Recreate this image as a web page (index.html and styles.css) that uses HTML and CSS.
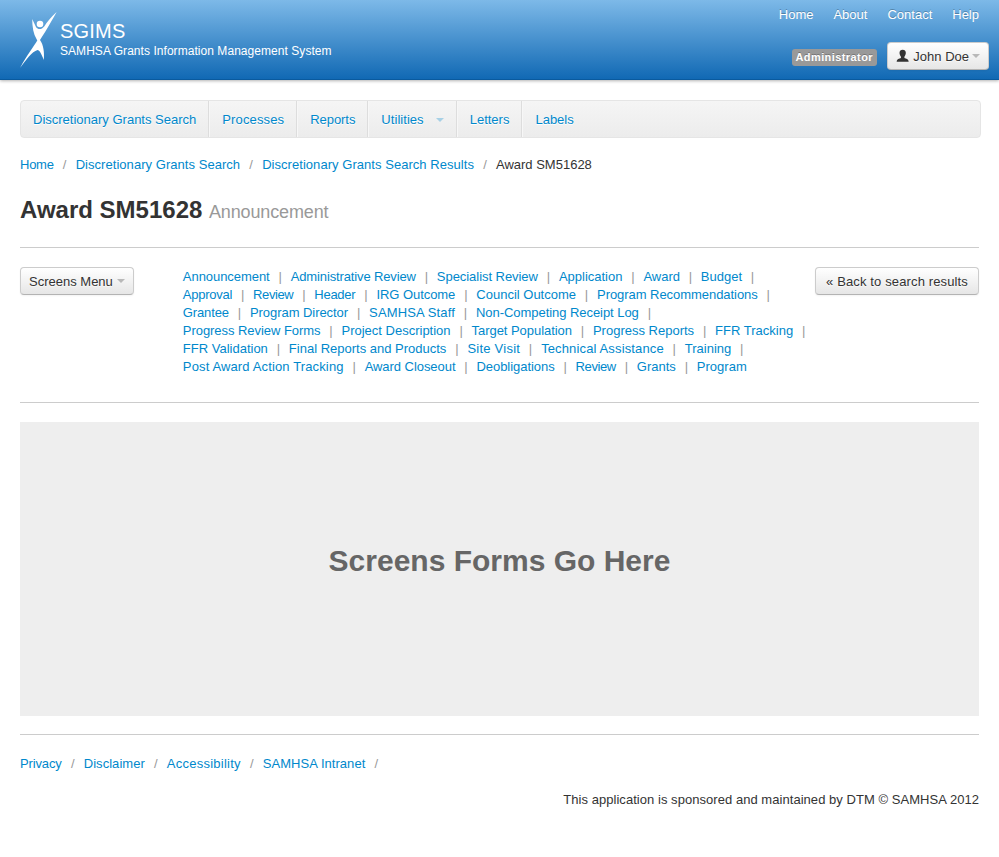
FILE: index.html
```html
<!DOCTYPE html>
<html lang="en">
<head>
<meta charset="utf-8">
<title>SGIMS - Award SM51628</title>
<link rel="stylesheet" href="styles.css">
</head>
<body>
<header class="banner">
  <svg class="logo" width="37" height="57" viewBox="0 0 37 57" fill="#fff"><circle cx="20" cy="12" r="3.300"/><path d="M36.600 0 C31 5 27 10 24.200 14.500 C21.500 17.800 18 17.800 16 15 L12.200 7 C12.200 15 13.500 22 16.500 27 L17.300 28.500 C14 34 7 43 0 56 C6 48 12 39.500 17.500 38 C19.500 38 21.500 42 23.800 48 C24.500 40 23.500 33 20 28 C24 22 30 12 36.600 0Z"/></svg>
  <div class="brand"><div class="brand-name">SGIMS</div><div class="tagline">SAMHSA Grants Information Management System</div></div>
  <div class="account">
    <nav class="top-links"><a>Home</a><a>About</a><a>Contact</a><a>Help</a></nav>
    <div class="user"><span class="role">Administrator</span><span class="btn user-btn"><svg class="person" width="14" height="14" viewBox="0 0 14 14"><path fill="#333" d="M7 0.500c2 0 3.300 1.200 3.300 3.200 0 1.600-.5 3-1.500 4v1.500c1.800.8 4.300 1 4.500 3.800H.700c.2-2.800 2.700-3 4.500-3.800V7.700c-1-1-1.500-2.400-1.500-4C3.700 1.700 5 .5 7 .5z"/></svg>John Doe<i class="caret"></i></span></div>
  </div>
</header>
<main class="page">
  <nav class="navbar"><a>Discretionary Grants Search</a><a class="wide-2">Processes</a><a class="tight-1">Reports</a><a class="wide-1">Utilities<i class="caret"></i></a><a>Letters</a><a class="last">Labels</a></nav>
  <div class="crumbs"><a class="tight-3">Home</a><s>/</s><a class="wide-1">Discretionary Grants Search</a><s>/</s><a class="wide-1">Discretionary Grants Search Results</a><s>/</s><span>Award SM51628</span></div>
  <h1>Award SM51628 <small>Announcement</small></h1>
  <section class="tools">
    <span class="btn">Screens Menu<i class="caret"></i></span>
    <div class="screens">
      <div><a class="tight-1">Announcement</a><a class="tight-2">Administrative Review</a><a class="tight-1">Specialist Review</a><a>Application</a><a class="tight-1">Award</a><a>Budget</a></div>
      <div><a class="tight-3">Approval</a><a class="tight-4">Review</a><a class="tight-3">Header</a><a class="tight-1">IRG Outcome</a><a>Council Outcome</a><a class="tight-1">Program Recommendations</a></div>
      <div><a class="tight-2">Grantee</a><a class="tight-1">Program Director</a><a class="wide-2">SAMHSA Staff</a><a class="tight-1">Non-Competing Receipt Log</a></div>
      <div><a class="tight-1">Progress Review Forms</a><a>Project Description</a><a class="tight-1">Target Population</a><a>Progress Reports</a><a>FFR Tracking</a></div>
      <div><a>FFR Validation</a><a>Final Reports and Products</a><a class="wide-3">Site Visit</a><a class="wide-2">Technical Assistance</a><a>Training</a></div>
      <div><a class="wide-2">Post Award Action Tracking</a><a class="tight-1">Award Closeout</a><a class="tight-1">Deobligations</a><a class="tight-4">Review</a><a>Grants</a><a class="end">Program</a></div>
    </div>
    <span class="btn back wide-2">« Back to search results</span>
  </section>
  <section class="forms">Screens Forms Go Here</section>
  <footer>
    <div class="crumbs foot"><a class="tight-2">Privacy</a><s>/</s><a class="wide-1">Disclaimer</a><s>/</s><a class="wide-3">Accessibility</a><s>/</s><a class="wide-1">SAMHSA Intranet</a><s>/</s></div>
    <p class="wide-1">This application is sponsored and maintained by DTM © SAMHSA 2012</p>
  </footer>
</main>
</body>
</html>
```
FILE: styles.css
```css
* { box-sizing: border-box; }
body { margin: 0; background: #fff; color: #333; font: 13px/18px "Liberation Sans", Arial, sans-serif; white-space: nowrap; }
a { color: #0088cc; text-decoration: none; }
.tight-1 { letter-spacing: -.05px; }
.tight-2 { letter-spacing: -.13px; }
.tight-3 { letter-spacing: -.26px; }
.tight-4 { letter-spacing: -.4px; }
.wide-1 { letter-spacing: .045px; }
.wide-2 { letter-spacing: .135px; }
.wide-3 { letter-spacing: .24px; }
.banner { height: 80px; display: flex; padding: 0 10px 0 20px; color: #fff; background: linear-gradient(#7db9e8, #1169b4); border-bottom: 1px solid #0a5a9e; box-shadow: 0 1px 3px rgba(0,0,0,.3); }
.logo { margin-top: 12px; }
.brand { margin: 20px 0 0 3px; }
.brand-name { font-size: 20px; line-height: 22px; letter-spacing: .2px; }
.tagline { font-size: 12px; line-height: 18px; letter-spacing: .05px; }
.account { margin-left: auto; display: flex; flex-direction: column; }
.top-links { display: flex; justify-content: flex-end; gap: 20px; margin: 6px 10px 0 0; }
.top-links a { color: #fff; text-shadow: 0 -1px 0 rgba(0,0,0,.25); }
.user { display: flex; gap: 10px; align-items: center; justify-content: flex-end; margin-top: 18px; }
.role { height: 17px; margin-top: 3px; padding: 0 4px 0 3px; border-radius: 3px; background: #999; font-size: 11px; line-height: 17px; font-weight: bold; letter-spacing: .42px; text-shadow: 0 -1px 0 rgba(0,0,0,.25); }
.btn { display: inline-flex; align-items: center; height: 28px; padding: 1px 8px 0; border: 1px solid #ccc; border-bottom-color: #b3b3b3; border-radius: 4px; background: linear-gradient(#fff, #e6e6e6); color: #333; box-shadow: inset 0 1px 0 rgba(255,255,255,.2), 0 1px 2px rgba(0,0,0,.05); text-shadow: 0 1px 1px rgba(255,255,255,.75); }
.user-btn { width: 102px; }
.person { margin: -2px 4px 0 0; }
.caret { width: 0; height: 0; border: 4px solid transparent; border-top-color: currentColor; border-bottom: 0; opacity: .3; margin: -1px 0 0 4px; }
.user-btn .caret { margin-left: 3px; }
.page { padding: 20px 20px 0; }
.navbar { display: flex; height: 38px; margin-right: -2px; border: 1px solid #e5e5e5; border-radius: 4px; background: linear-gradient(#f5f5f5, #ececec); }
.navbar a { display: flex; align-items: center; padding: 2px 12px 0; border-right: 1px solid #ddd; box-shadow: 1px 0 #f7f7f7; text-shadow: 0 1px 0 #fff; }
.navbar a + a { padding-left: 13px; }
.navbar .last { border: 0; box-shadow: none; }
.navbar .caret { margin: 0 0 0 12px; }
.crumbs { display: flex; margin-top: 17px; }
.crumbs s { text-decoration: none; color: #999; width: 22px; text-align: center; }
.page > .crumbs { margin-top: 18px; }
h1 { margin: 18px 0 0; height: 56px; border-bottom: 1px solid #ccc; font-size: 24px; line-height: 36px; }
h1 small { font-size: 18px; font-weight: normal; color: #999; letter-spacing: -.14px; }
.tools { display: flex; height: 155px; padding-top: 19px; border-bottom: 1px solid #ccc; align-items: flex-start; }
.screens { margin: 1px 0 0 49px; }
.screens div { display: flex; }
.screens a { display: flex; }
.screens a::after { content: "|"; color: #999; width: 21px; text-align: center; }
.screens .end::after { content: none; }
.back { margin-left: auto; padding: 1px 10px 0; }
.forms { display: flex; align-items: center; justify-content: center; height: 294px; margin-top: 19px; padding-bottom: 17px; background: #eee; color: #666; font-size: 30px; font-weight: bold; }
footer { margin-top: 18px; border-top: 1px solid #ccc; }
.page .foot { margin-top: 20px; }
footer p { margin: 18px 0 0; text-align: right; }
```
